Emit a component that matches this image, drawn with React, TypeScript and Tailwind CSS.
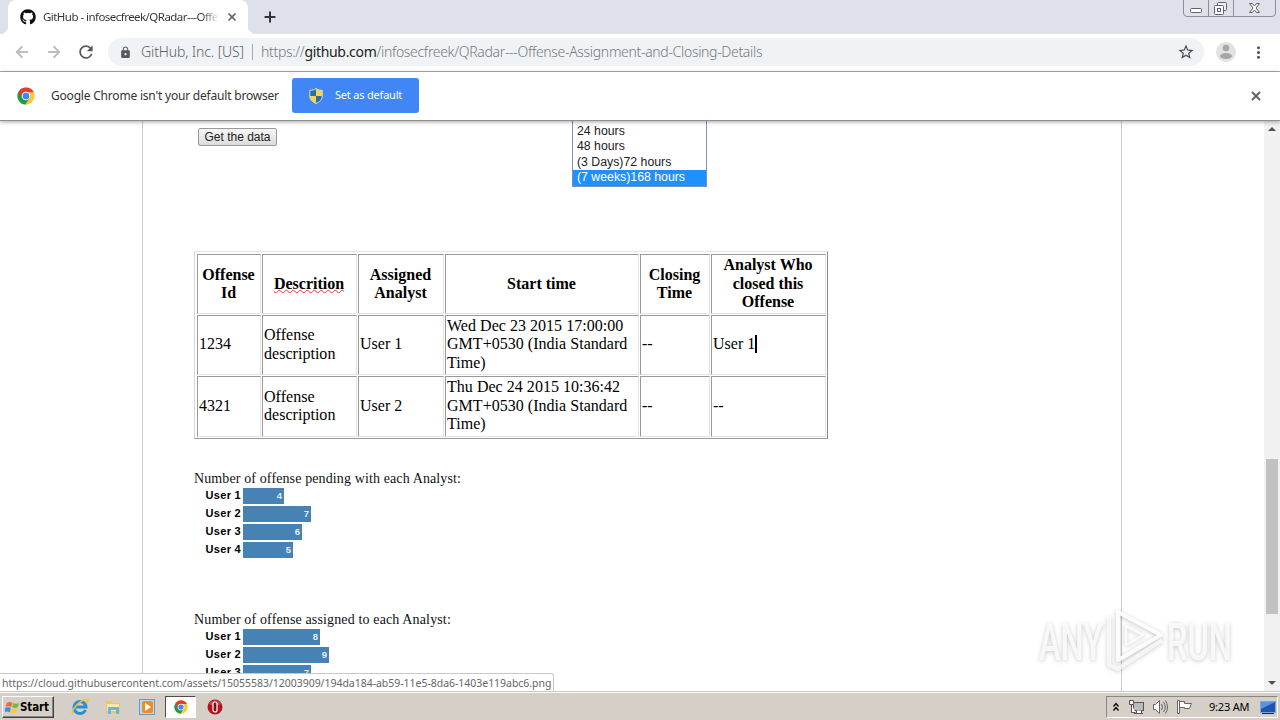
import type { ReactNode } from "react";
import { ArrowLeft, ArrowRight, Plus, X } from "lucide-react";
import { FaGithub } from "react-icons/fa";
import { MdLock, MdMoreVert, MdRefresh, MdStarBorder } from "react-icons/md";

interface Bar {
    label: string;
    value: number;
    width: number;
}

const pending: Bar[] = [
    { label: "User 1", value: 4, width: 41 },
    { label: "User 2", value: 7, width: 68 },
    { label: "User 3", value: 6, width: 59 },
    { label: "User 4", value: 5, width: 50 },
];

const assigned: Bar[] = [
    { label: "User 1", value: 8, width: 77 },
    { label: "User 2", value: 9, width: 86 },
    { label: "User 3", value: 7, width: 68 },
];

function ChromeLogo({ size }: { size: number }) {
    return (
        <svg width={size} height={size} viewBox="0 0 48 48">
            <circle cx="24" cy="24" r="23" fill="#fcc934" />
            <path d="M24 24 4.1 12.5A23 23 0 0 0 22 46.9L34 30Z" fill="#1e9b50" />
            <path d="M4.1 12.5A23 23 0 0 1 43.9 12.5L46 14H24L14.5 29.5Z" fill="#e33b2e" />
            <circle cx="24" cy="24" r="11.5" fill="#fff" />
            <circle cx="24" cy="24" r="9" fill="#4285f4" />
        </svg>
    );
}

function Shield() {
    return (
        <svg width="14" height="16" viewBox="0 0 14 16">
            <path d="M7 .5C5 2 3 2.3.8 2.3V8c0 4 3 6 6.2 7.5Z" fill="#2f6cab" />
            <path d="M7 .5c2 1.5 4 1.8 6.2 1.8V8c0 4-3 6-6.2 7.5Z" fill="#f7d54a" />
            <path d="M.8 8H7v7.5C3.8 14 .8 12 .8 8Z" fill="#f7d54a" />
            <path d="M7 8h6.2c0 4-3 6-6.2 7.5Z" fill="#2f6cab" />
            <path d="M7 .5C5 2 3 2.3.8 2.3V8c0 4 3 6 6.2 7.5C10.2 14 13.2 12 13.2 8V2.3C11 2.3 9 2 7 .5Z" fill="none" stroke="#d9dfc0" strokeWidth="1" />
        </svg>
    );
}

function WindowButtons() {
    return (
        <svg width="93" height="17" viewBox="0 0 93 17" fill="none" stroke="#5d626b">
            <path d="M.5 0v13q0 3.500 3.500 3.500h85q3.500 0 3.500-3.500V0M25.500 0v16M50.500 0v16" stroke="#8a8f99" />
            <rect x="7.500" y="8.500" width="11" height="4" rx="1" fill="#fff" />
            <rect x="34.500" y="2.500" width="9" height="8" rx="1" fill="#eef0f3" />
            <rect x="31.500" y="5.500" width="9" height="9" rx="1" fill="#fff" />
            <rect x="34.500" y="8.500" width="3" height="3" />
            <path d="m66.500 3.500h3l2 2.500 2-2.500h3l-3.500 4.500 3.500 4.500h-3l-2-2.500-2 2.500h-3l3.500-4.500Z" fill="#fff" />
        </svg>
    );
}

function Cell({ head, children }: { head?: boolean; children: ReactNode }) {
    return (
        <div className={"flex items-center whitespace-pre border border-t-[#999] border-l-[#999] border-r-[#e4e4e4] border-b-[#e4e4e4] " + (head ? "justify-center pr-px text-center font-bold" : "pb-px pl-px tracking-[0.03px]")}>
            {children}
        </div>
    );
}

function BarChart({ bars }: { bars: Bar[] }) {
    return (
        <div className="flex flex-col gap-[2px] font-['Liberation_Sans']">
            {bars.map((bar) => (
                <div key={bar.label} className="flex h-4 items-center">
                    <span className="w-[49px] pr-[2px] pb-px text-right text-[11px] leading-[15px] font-bold tracking-[0.3px]">{bar.label}</span>
                    <span className="h-4 bg-[#4682b4] pr-[2px] text-right text-[9.500px] leading-4 font-bold text-[#e4edf5]" style={{ width: bar.width }}>
                        {bar.value}
                    </span>
                </div>
            ))}
        </div>
    );
}

function TabStrip() {
    return (
        <div className="flex h-[34px] items-start bg-[#dee1e9]">
            <div className="mt-auto size-2 rounded-br-lg bg-[#dee1e9] shadow-[3px_3px_0_white]" />
            <div className="flex h-[34px] w-[240px] items-center rounded-t-lg bg-white pl-3">
                <FaGithub size={16} className="text-[#111]" />
                <span className="ml-[7px] w-[176px] bg-gradient-to-r from-[#333] from-90% to-white bg-clip-text text-[11.500px] tracking-[-0.54px] whitespace-nowrap text-transparent">
                    GitHub - infosecfreek/QRadar---Offe
                </span>
                <X size={12} strokeWidth={3.500} className="ml-[7px] text-[#5f6368]" />
            </div>
            <div className="mt-auto size-2 rounded-bl-lg bg-[#dee1e9] shadow-[-3px_3px_0_white]" />
            <Plus size={16} strokeWidth={3} className="mt-[9px] ml-[6px] text-[#33363b]" />
            <div className="mr-[4px] ml-auto">
                <WindowButtons />
            </div>
        </div>
    );
}

function Toolbar() {
    return (
        <div className="flex h-[38px] items-center border-b border-[#ababab] bg-white pb-px">
            <ArrowLeft size={18} strokeWidth={2.400} className="ml-[13px] text-[#bdbdbd]" />
            <ArrowRight size={18} strokeWidth={2.400} className="ml-[14px] text-[#bdbdbd]" />
            <MdRefresh size={20} className="ml-[13px] text-[#55585c]" />
            <div className="ml-[12px] flex h-[28px] w-[1096px] items-center rounded-full bg-[#f0f3f6] pl-[11px] text-sm text-[#75797e]">
                <MdLock size={13} className="text-[#55595e]" />
                <span className="ml-[9px] w-[104px] font-light tracking-[-0.12px] whitespace-nowrap text-[#5c6064]">GitHub, Inc. [US]</span>
                <span className="ml-[7px] h-4 w-px bg-[#a5a8ac]" />
                <span className="ml-2 font-light tracking-[-0.32px] whitespace-nowrap">
                    https://<span className="font-normal text-[#222]">github.com</span>/infosecfreek/QRadar---Offense-Assignment-and-Closing-Details
                </span>
                <MdStarBorder size={18} className="mr-[9px] ml-auto text-[#45494e]" />
            </div>
            <svg width="20" height="20" viewBox="0 0 20 20" className="ml-3">
                <circle cx="10" cy="10" r="10" fill="#e2e2e2" />
                <circle cx="10" cy="6" r="3.200" fill="#a5a5a5" />
                <ellipse cx="10" cy="14" rx="6" ry="3" fill="#a5a5a5" />
            </svg>
            <MdMoreVert size={19} className="ml-[13px] text-[#55585c]" />
        </div>
    );
}

function DefaultBrowserBar() {
    return (
        <div className="z-10 flex h-[49px] items-center border-b border-[#909090] bg-white pb-px shadow-[0_1px_4px_rgba(0,0,0,0.35)]">
            <div className="ml-[17px]">
                <ChromeLogo size={18} />
            </div>
            <span className="ml-4 w-[241px] text-[12px] tracking-[-0.2px] whitespace-nowrap text-[#333]">Google Chrome isn't your default browser</span>
            <button className="flex h-[35px] w-[127px] items-center rounded-[3px] bg-[#4285f4] pl-[17px] text-[11px] tracking-[-0.2px] whitespace-nowrap text-white">
                <Shield />
                <span className="ml-3">Set as default</span>
            </button>
            <X size={14} strokeWidth={3.300} className="mr-[17px] ml-auto text-[#5f6368]" />
        </div>
    );
}

function OffenseTable() {
    return (
        <div className="grid w-[634px] grid-cols-[64px_95px_86px_194px_70px_115px] grid-rows-[60px_60px_61px] gap-px border border-t-[#e4e4e4] border-r-[#8c8c8c] border-b-[#999] border-l-[#d5d5d5] pt-[2px] pr-px pb-px pl-[2px] text-[16px] leading-[18.400px]">
            <Cell head>{"Offense\nId"}</Cell>
            <Cell head>
                <span className="underline decoration-[#e33] decoration-wavy decoration-1 underline-offset-0">Descrition</span>
            </Cell>
            <Cell head>{"Assigned\nAnalyst"}</Cell>
            <Cell head>Start time</Cell>
            <Cell head>{"Closing\nTime"}</Cell>
            <Cell head>{"Analyst Who\nclosed this\nOffense"}</Cell>

            <Cell>1234</Cell>
            <Cell>{"Offense\ndescription"}</Cell>
            <Cell>User 1</Cell>
            <Cell>{"Wed Dec 23 2015 17:00:00\nGMT+0530 (India Standard\nTime)"}</Cell>
            <Cell>--</Cell>
            <Cell>
                User 1<span className="mb-[2px] h-[18px] w-[2px] bg-black" />
            </Cell>

            <Cell>4321</Cell>
            <Cell>{"Offense\ndescription"}</Cell>
            <Cell>User 2</Cell>
            <Cell>{"Thu Dec 24 2015 10:36:42\nGMT+0530 (India Standard\nTime)"}</Cell>
            <Cell>--</Cell>
            <Cell>--</Cell>
        </div>
    );
}

function Watermark() {
    return (
        <svg width="210" height="68" viewBox="0 0 210 68" className="absolute top-[485px] left-[1036px] drop-shadow-[0_1px_2px_rgba(0,0,0,0.27)]">
            <g fill="#fff" fillOpacity=".8" fontFamily="Roboto, sans-serif" fontWeight="500" fontSize="52">
                <text x="3" y="54" textLength="64" lengthAdjust="spacingAndGlyphs">ANY</text>
                <text x="131" y="54" textLength="65" lengthAdjust="spacingAndGlyphs">RUN</text>
            </g>
            <g fill="none" stroke="#fff" strokeWidth="4" strokeLinejoin="round">
                <path d="M82 6v48l43-25Z" strokeOpacity=".9" />
                <path d="M73 10v49l9 4 44-29" strokeOpacity=".7" />
                <path d="m90 20 17 9-17 10Z" strokeWidth="2" strokeOpacity=".8" />
            </g>
        </svg>
    );
}

function Page() {
    return (
        <div className="relative flex h-[570px] overflow-hidden bg-white font-['Liberation_Serif'] text-black">
            <div className="ml-[142px] w-[980px] border-x border-[#ccc] pl-[51px]">
                <div className="flex h-[130px] items-start font-['Liberation_Sans'] text-xs">
                    <button className="mt-[7px] ml-[4px] h-[18px] w-[79px] rounded-[2px] border border-[#999] bg-gradient-to-b from-[#f6f6f6] to-[#dcdcdc] text-[12px] leading-4 whitespace-nowrap text-[#222]">
                        Get the data
                    </button>
                    <div className="ml-[295px] w-[135px] border border-t-0 border-[#7a8fc0] pt-[2px] text-[12.300px] leading-[15.700px] text-[#222]">
                        <div className="pt-px pl-1 leading-[15px]">24 hours</div>
                        <div className="pl-1">48 hours</div>
                        <div className="pl-1">(3 Days)72 hours</div>
                        <div className="bg-[#1e90ff] pl-1 text-white">(7 weeks)168 hours</div>
                    </div>
                </div>
                <OffenseTable />
                <div className="mt-[31px] h-[18px] text-[14px] leading-[18px] tracking-[0.12px] text-[#111]">Number of offense pending with each Analyst:</div>
                <BarChart bars={pending} />
                <div className="mt-[53px] h-[18px] text-[14px] leading-[18px] tracking-[0.14px] text-[#111]">Number of offense assigned to each Analyst:</div>
                <BarChart bars={assigned} />
            </div>
            <div className="ml-auto flex w-4 flex-col items-center bg-[#f1f1f1]">
                <div className="mt-[6px] border-x-4 border-b-4 border-x-transparent border-b-[#505050]" />
                <div className="mt-[328px] h-[155px] w-3 bg-[#c1c1c1]" />
                <div className="mt-[67px] border-x-4 border-t-4 border-x-transparent border-t-[#505050]" />
            </div>
            <Watermark />
            <div className="absolute bottom-0 left-0 h-[18px] w-[554px] rounded-tr-[3px] border border-b-0 border-l-0 border-[#c8c8c8] bg-white pl-[2px] font-['Noto_Sans'] text-[10.500px] leading-[18px] tracking-[-0.03px] whitespace-nowrap text-[#666]">
                https://cloud.githubusercontent.com/assets/15055583/12003909/194da184-ab59-11e5-8da6-1403e119abc6.png
            </div>
        </div>
    );
}

function Taskbar() {
    return (
        <div className="flex h-[29px] items-center border-t border-[#c9c8c0] bg-[#d6cfc7] pt-[2px] font-['Noto_Sans'] text-[11px] text-black shadow-[inset_0_1px_0_white]">
            <div className="ml-[2px] flex h-[22px] w-[52px] items-center border border-t-white border-r-[#404040] border-b-[#404040] border-l-white pl-[2px] font-['DejaVu_Sans_Condensed'] font-bold shadow-[inset_-1px_-1px_0_#8b8680]">
                <svg width="15" height="15" viewBox="0 0 16 16">
                    <path d="M2 3q3-2 6 0L6.500 7.500q-3-1.500-6 0Z" fill="#ed6b37" />
                    <path d="M8.800 3.200q3 1.600 6.400-.4L13.700 7.500q-3 1.700-6 .3Z" fill="#75b943" />
                    <path d="M.3 8.500q3-1.800 6 0L5 13q-3-1.700-5.500 0Z" fill="#3c8fd9" />
                    <path d="M7.300 8.700q3 1.600 6.200-.3L12 13q-3 1.900-6.200.4Z" fill="#f9c83c" />
                </svg>
                <span className="pt-px text-[11.500px] tracking-[-0.1px]">Start</span>
            </div>
            {/* pinned programs */}
            <svg width="18" height="18" viewBox="0 0 18 18" className="ml-[17px]">
                <path d="M14.500 12A6 6 0 1 1 15 9H5" fill="none" stroke="#258fd8" strokeWidth="3" />
                <path d="M2 16.500C-1 13 9 1 16.500 1.500c1 .5.500 2-.5 3.500" fill="none" stroke="#edc13e" strokeWidth="1.500" />
            </svg>
            <svg width="17" height="16" viewBox="0 0 17 16" className="ml-4">
                <path d="M1 2h6l1 2h7v10H1Z" fill="#e9c767" />
                <path d="M2 5h12v7H2Z" fill="#f8eaaa" />
                <path d="M3 15V9q0-1 1-1h9q1 0 1 1v6h-3v-4H6v4Z" fill="#67b5e4" />
            </svg>
            <svg width="16" height="16" viewBox="0 0 16 16" className="ml-[17px]">
                <rect x=".5" y=".5" width="15" height="15" fill="#b8d8ef" stroke="#5f9fcc" />
                <rect x="3" y="2" width="11" height="12" rx="2" fill="#f28c1c" />
                <path d="m6 4 6 4-6 4Z" fill="#fff" />
            </svg>
            <div className="ml-[10px] flex h-[22px] w-[31px] items-center justify-center border border-t-[#504c48] border-r-white border-b-white border-l-[#504c48] bg-white">
                <ChromeLogo size={14} />
            </div>
            <svg width="16" height="16" viewBox="0 0 16 16" className="ml-[11px]">
                <circle cx="8" cy="8" r="7.500" fill="#b41420" />
                <path d="M2 5a7 7 0 0 1 12 0Q8 8 2 5Z" fill="#e8606a" opacity=".6" />
                <rect x="6" y="3" width="4" height="10" rx="2" fill="#75101a" stroke="#fff" strokeWidth="1.200" />
            </svg>
            {/* notification area */}
            <div className="mr-[2px] ml-auto flex h-[22px] w-[172px] items-center border border-t-[#8a8680] border-r-white border-b-white border-l-[#8a8680]">
                <svg width="8" height="10" viewBox="0 0 8 10" className="ml-[5px]" fill="none" stroke="#000" strokeWidth="1.300">
                    <path d="m1.500 4.500 2.500-3 2.500 3M1.500 8.500l2.500-3 2.500 3" />
                </svg>
                <svg width="17" height="16" viewBox="0 0 17 16" className="ml-[8px]" fill="#fff" stroke="#555">
                    <rect x="5.500" y="3.500" width="10" height="8" fill="#bbb" />
                    <path d="M8.500 11.500v3h5v-3M6 14.500h9" />
                    <path d="M1.500 1.500h4v4h-4ZM3.500 5.500v8h4" />
                </svg>
                <svg width="17" height="16" viewBox="0 0 17 16" className="ml-[7px]" fill="none" stroke="#666">
                    <path d="M1.500 5.500h2l4-4v13l-4-4h-2Z" fill="#fff" />
                    <path d="M9.500 5q2 3 0 6M11.500 3q3.500 5 0 10M13.500 1.500q4 6.500 0 13" />
                </svg>
                <svg width="17" height="16" viewBox="0 0 17 16" className="ml-[7px]" fill="#fff" stroke="#666">
                    <path d="M3.500 2.500h5v2h7l-2 5h-5v-1h-5Z" />
                    <path d="M1.500 1.500h2v13h-2Z" />
                </svg>
                <span className="ml-4 w-[42px] tracking-[-0.2px] whitespace-nowrap">9:23 AM</span>
                <svg width="16" height="13" viewBox="0 0 16 13" className="ml-[9px]">
                    <rect x=".5" y=".5" width="15" height="11" fill="#1d56ad" stroke="#7aa6da" />
                    <path d="M1 1h14L1 8Z" fill="#5594df" />
                    <path d="M2 12.500h12" stroke="#224" />
                </svg>
            </div>
        </div>
    );
}

export default function App() {
    return (
        <div className="flex h-[720px] w-[1280px] flex-col overflow-hidden bg-white font-['Noto_Sans',sans-serif]">
            <TabStrip />
            <Toolbar />
            <DefaultBrowserBar />
            <Page />
            <Taskbar />
        </div>
    );
}
